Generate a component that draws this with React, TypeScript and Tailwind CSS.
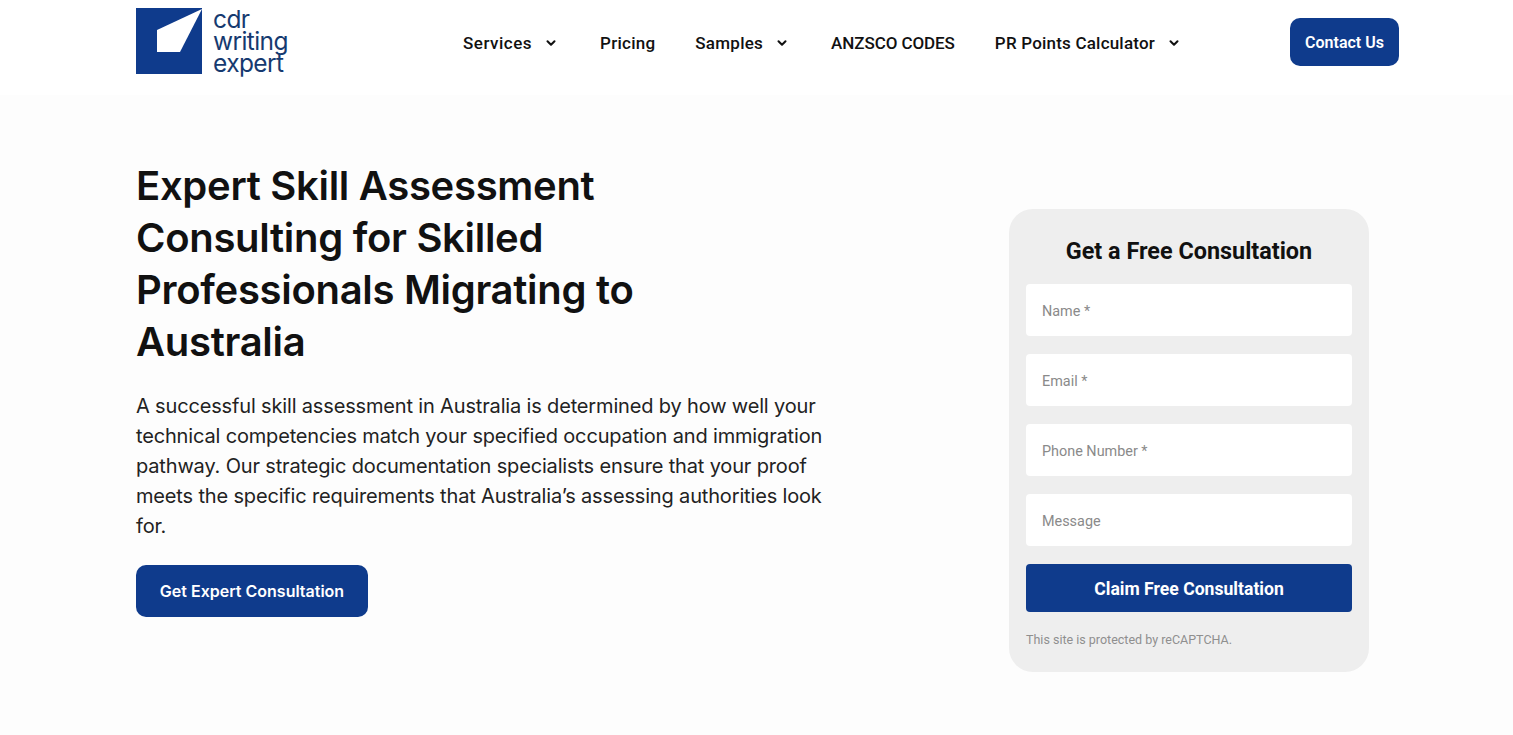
import React from "react";
import { ChevronDown } from "lucide-react";

const navItems = [
    { label: "Services", arrow: true, spacing: "tracking-[0.5px]" },
    { label: "Pricing", arrow: false, spacing: "tracking-[0.25px]" },
    { label: "Samples", arrow: true, spacing: "tracking-[0.25px]" },
    { label: "ANZSCO CODES", arrow: false, spacing: "tracking-[-0.08px]" },
    { label: "PR Points Calculator", arrow: true, spacing: "tracking-[0.2px]" },
];

const fields = ["Name *", "Email *", "Phone Number *", "Message"];

const Logo = () => (
    <div className="w-[153px] flex items-center gap-[11px]">
        <svg width="66" height="66" viewBox="0 0 66 66" className="block shrink-0">
            <rect width="66" height="66" fill="#0f3b8c" />
            <polygon points="66,1 21,22 21,44 44,44" fill="#ffffff" />
        </svg>
        <div className="font-['Inter',sans-serif] text-[24.5px] leading-[22px] tracking-[-0.6px] text-[#163a70]">
            <div>cdr</div>
            <div>writing</div>
            <div>expert</div>
        </div>
    </div>
);

const App = () => {
    return (
        <div className="min-h-[735px] bg-[#fdfdfd] overflow-hidden font-['Inter',sans-serif]">
            <header className="h-[95px] bg-white pl-[136px] pr-[114px] pt-2 flex items-start">
                <Logo />
                <nav className="ml-[174px] h-[70px] pt-[2px] flex items-center gap-10 font-['Roboto',sans-serif] text-[17px] font-medium text-[#111111]">
                    {navItems.map((item) => (
                        <div key={item.label} className="flex items-center">
                            <span className={item.spacing}>{item.label}</span>
                            {item.arrow && (
                                <ChevronDown size={14} strokeWidth={3.5} className="ml-3 mr-[2px] -mt-[3px] text-[#111111]" />
                            )}
                        </div>
                    ))}
                </nav>
                <button className="ml-auto mt-[10px] w-[109px] h-12 pt-[2px] rounded-[10px] bg-[#0f3b8c] text-white font-['Roboto',sans-serif] text-[16px] font-semibold">
                    Contact Us
                </button>
            </header>

            <main className="pl-[136px] flex items-start">
                <div className="w-[873px] pt-[65px]">
                    <h1 className="w-[560px] font-['Inter',sans-serif] text-[40px] leading-[52px] font-semibold tracking-[-0.3px] text-[#111111]">
                        Expert Skill Assessment Consulting for Skilled Professionals Migrating to Australia
                    </h1>
                    <p className="mt-[23px] w-[690px] text-[20px] leading-[30px] tracking-[-0.16px] text-[#222222]">
                        A successful skill assessment in Australia is determined by how well your technical competencies match your specified occupation and immigration pathway. Our strategic documentation specialists ensure that your proof meets the specific requirements that Australia’s assessing authorities look for.
                    </p>
                    <button className="mt-6 w-[232px] h-[52px] rounded-[10px] bg-[#0f3b8c] text-white text-[16px] font-semibold">
                        Get Expert Consultation
                    </button>
                </div>

                <aside className="mt-[114px] w-[360px] h-[463px] rounded-[24px] bg-[#eeeeee] px-[17px] pt-[27px]">
                    <h2 className="text-center font-['Roboto',sans-serif] text-[23.4px] leading-[30px] font-bold text-[#111111]">
                        Get a Free Consultation
                    </h2>
                    <div className="mt-[18px] flex flex-col gap-[18px]">
                        {fields.map((field) => (
                            <div
                                key={field}
                                className="h-[52px] rounded-[4px] bg-white px-4 pt-1 flex items-center font-['Roboto',sans-serif] text-[14.4px] text-[#8a8a8a]"
                            >
                                {field}
                            </div>
                        ))}
                    </div>
                    <button className="mt-[18px] w-full h-12 pt-[2px] rounded-[4px] bg-[#0f3b8c] text-white font-['Roboto',sans-serif] text-[17.6px] font-bold">
                        Claim Free Consultation
                    </button>
                    <p className="mt-5 font-['Roboto',sans-serif] text-[12.5px] leading-4 text-[#8f8f8f]">
                        This site is protected by reCAPTCHA.
                    </p>
                </aside>
            </main>
        </div>
    );
};

export default App;
